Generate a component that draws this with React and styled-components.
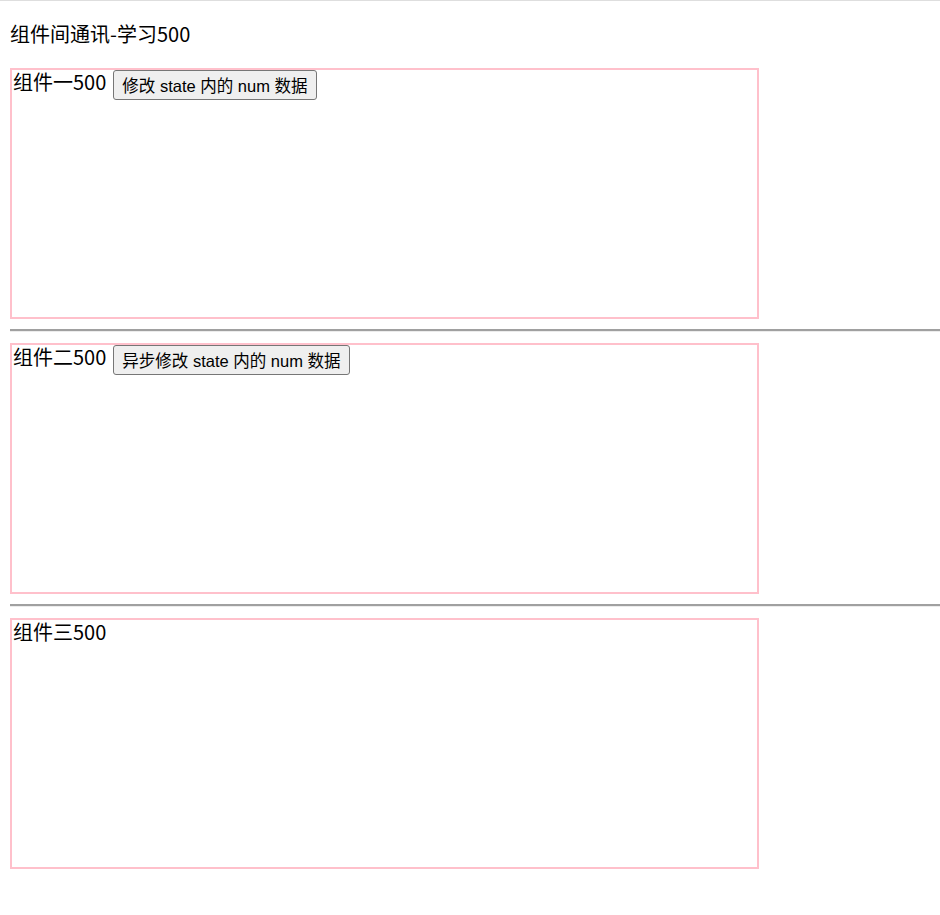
import { useState } from "react";
import styled, { createGlobalStyle } from "styled-components";

const GlobalStyle = createGlobalStyle`
html, body {
  margin: 0;
  padding: 0;
  background: #fff;
}
body {
  font-family: "Noto Sans CJK SC", "Noto Sans", sans-serif;
  color: #000;
}
`

const Page = styled.div`
border-top: 1px solid #dedede;
padding: 20px 0 40px 10px;
`
const Title = styled.div`
font-size: 20px;
line-height: 26px;
margin-bottom: 21px;
`
const Card = styled.div`
box-sizing: border-box;
width: 749px;
height: 251px;
border: 2px solid pink;
display: flex;
align-items: flex-start;
gap: 7px;
padding-left: 1px;
`
const CardLabel = styled.span`
font-size: 20px;
line-height: 24px;
`
const ActionButton = styled.button`
box-sizing: border-box;
height: 30px;
margin-top: 0;
padding: 0 8px;
font-family: "Liberation Sans", "Noto Sans CJK SC", sans-serif;
font-size: 16.5px;
color: #000;
background: #efefef;
border: 1px solid #767676;
border-radius: 3px;
cursor: pointer;
&:hover {
  background: #e5e5e5;
}
`
const Divider = styled.hr`
height: 0;
margin: 10px 0 11px;
border: none;
border-top: 2px solid #a0a0a0;
border-bottom: 1px solid #ececec;
`

function CompOne({ num, onChange }) {
    return (
        <Card>
            <CardLabel>组件一{num}</CardLabel>
            <ActionButton onClick={onChange}>修改 state 内的 num 数据</ActionButton>
        </Card>
    )
}

function CompTwo({ num, onChange }) {
    return (
        <Card>
            <CardLabel>组件二{num}</CardLabel>
            <ActionButton onClick={onChange}>异步修改 state 内的 num 数据</ActionButton>
        </Card>
    )
}

function CompThree({ num }) {
    return (
        <Card>
            <CardLabel>组件三{num}</CardLabel>
        </Card>
    )
}

function App() {
    const [num, setNum] = useState(500);

    const changeNum = () => setNum(n => n + 1);
    const changeNumAsync = () => {
        setTimeout(() => setNum(n => n + 1), 1000);
    };

    return (
        <>
            <GlobalStyle />
            <Page>
                <Title>组件间通讯-学习{num}</Title>
                <CompOne num={num} onChange={changeNum} />
                <Divider />
                <CompTwo num={num} onChange={changeNumAsync} />
                <Divider />
                <CompThree num={num} />
            </Page>
        </>
    )
}

export default App;
